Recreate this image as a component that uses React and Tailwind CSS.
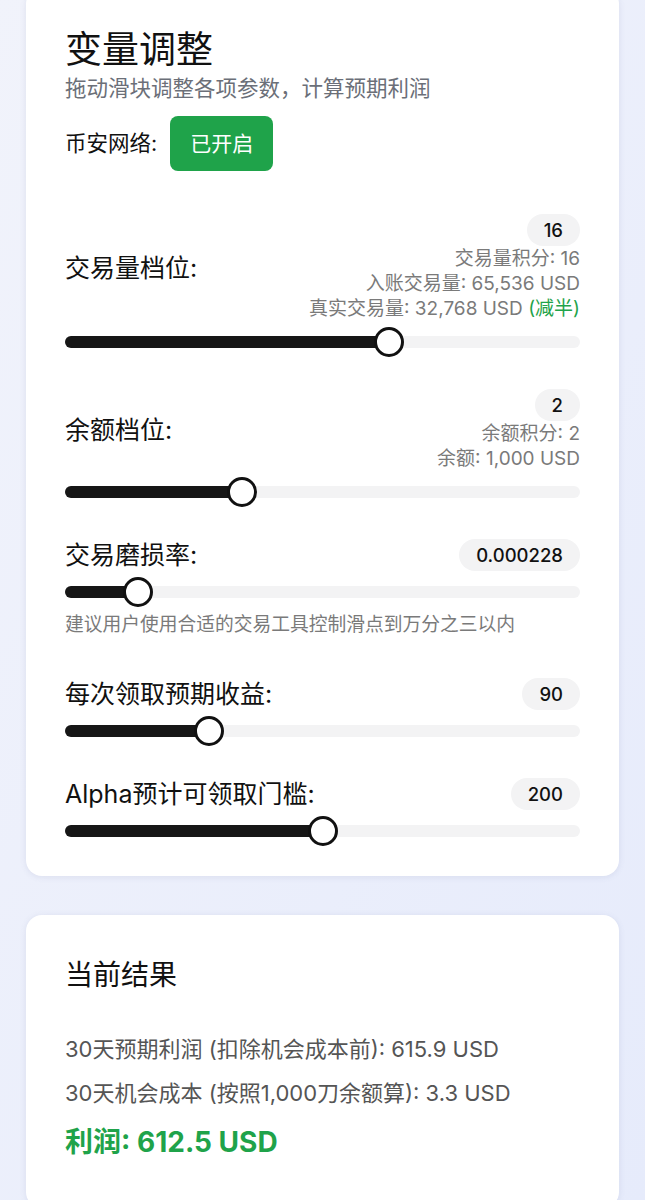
import React from 'react';

const font = { fontFamily: '"Inter", "Noto Sans CJK SC", sans-serif' };

const sliders = [
  {
    label: '交易量档位:',
    value: '16',
    pct: 63,
    info: [
      '交易量积分: 16',
      '入账交易量: 65,536 USD',
      <>真实交易量: 32,768 USD <span className="text-[#1fa34a]">(减半)</span></>,
    ],
  },
  {
    label: '余额档位:',
    value: '2',
    pct: 34.4,
    info: ['余额积分: 2', '余额: 1,000 USD'],
  },
  {
    label: '交易磨损率:',
    value: '0.000228',
    pct: 14.1,
    hint: '建议用户使用合适的交易工具控制滑点到万分之三以内',
  },
  { label: '每次领取预期收益:', value: '90', pct: 27.9 },
  { label: 'Alpha预计可领取门槛:', value: '200', pct: 50 },
];

const Track = ({ pct }) => (
  <div className="relative h-[12px] rounded-full bg-[#f3f3f4]">
    <div className="absolute left-0 top-0 h-full rounded-full bg-[#161616]" style={{ width: `${pct}%` }} />
    <div
      className="absolute top-1/2 h-[30px] w-[30px] -translate-x-1/2 -translate-y-1/2 rounded-full border-[3px] border-[#111] bg-white"
      style={{ left: `${pct}%` }}
    />
  </div>
);

const SliderRow = ({ label, value, pct, info, hint }) => (
  <div>
    <div className="flex items-center justify-between">
      <span className="text-[25px] leading-[32px] text-[#111]">{label}</span>
      <div className="flex flex-col items-end">
        <span className="rounded-full bg-[#f3f3f4] px-[17px] text-[18.5px] font-medium leading-[32px] text-[#111]">{value}</span>
        {info && (
          <div className="flex flex-col items-end text-[19px] leading-[25px] text-[#7a7a7a]">
            {info.map((line, i) => (
              <span key={i}>{line}</span>
            ))}
          </div>
        )}
      </div>
    </div>
    <div className="mt-[15px]">
      <Track pct={pct} />
    </div>
    {hint && <p className="mt-[15px] text-[18.75px] leading-[24px] text-[#7a7a7a]">{hint}</p>}
  </div>
);

export default function App() {
  return (
    <div className="min-h-[1200px] bg-gradient-to-br from-[#f1f3fb] to-[#e6ebfb] px-[26px]" style={font}>
      <div className="-mt-[12px] rounded-2xl bg-white px-[39px] pb-[39px] pt-[40px] shadow-[0_1px_6px_rgba(90,100,150,0.12)]">
        <h1 className="text-[37px] leading-[44px] text-[#111]">变量调整</h1>
        <p className="mt-[2px] text-[21.5px] leading-[28px] text-[#6b6f78]">拖动滑块调整各项参数，计算预期利润</p>
        <div className="mt-[14px] flex items-center gap-[13px]">
          <span className="text-[21.5px] text-[#111]">币安网络:</span>
          <span className="flex h-[55px] w-[103px] items-center justify-center rounded-lg bg-[#1fa34a] text-[21px] text-white">
            已开启
          </span>
        </div>
        <div className="mt-[43px] flex flex-col gap-[41px]">
          {sliders.map((s) => (
            <SliderRow key={s.label} {...s} />
          ))}
        </div>
      </div>

      <div className="mt-[39px] rounded-2xl bg-white px-[39px] pb-[48px] pt-[43px] shadow-[0_1px_6px_rgba(90,100,150,0.12)]">
        <h2 className="text-[28px] leading-[34px] text-[#111]">当前结果</h2>
        <div className="mt-[42px] flex flex-col gap-[14px] text-[22px] leading-[30px] text-[#555]">
          <p>30天预期利润 (扣除机会成本前): 615.9 USD</p>
          <p>30天机会成本 (按照1,000刀余额算): 3.3 USD</p>
        </div>
        <p className="mt-[16px] text-[28px] font-bold leading-[36px] text-[#1fa34a]">利润: 612.5 USD</p>
      </div>
    </div>
  );
}
